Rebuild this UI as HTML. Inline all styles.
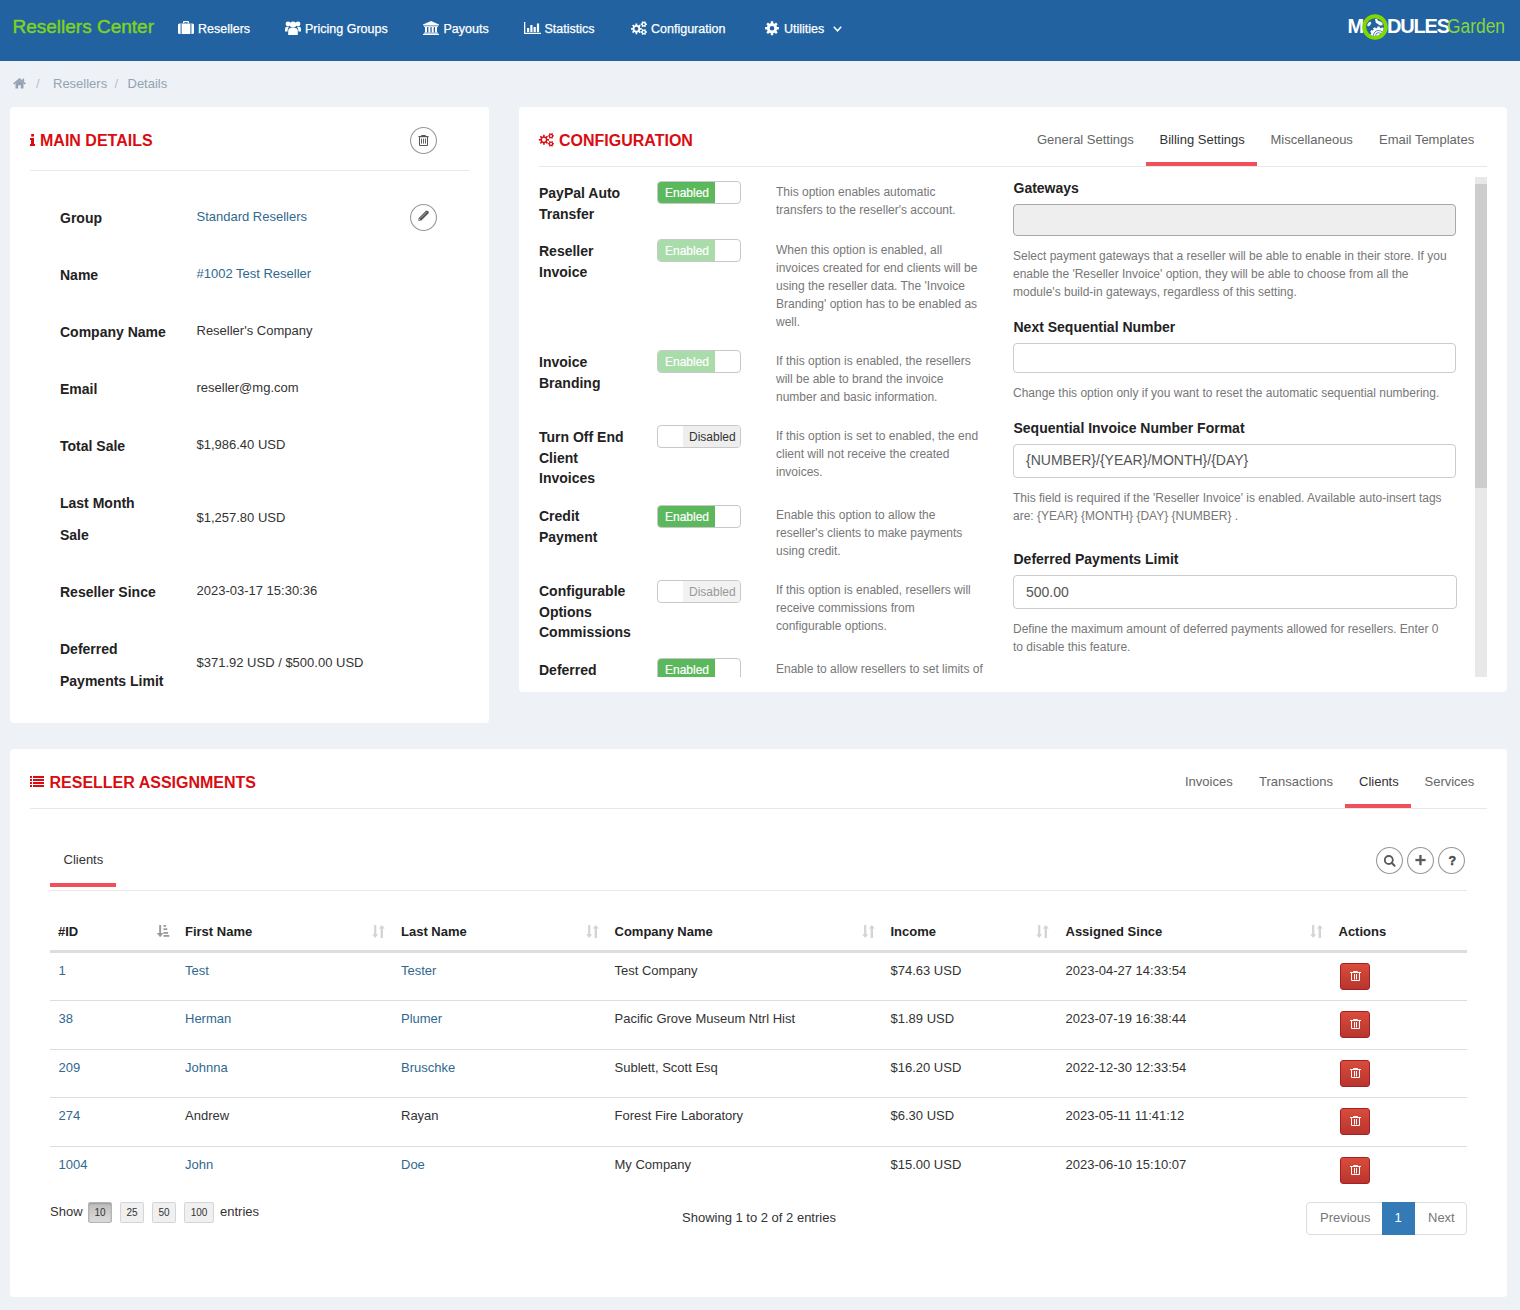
<!DOCTYPE html><html><head><meta charset="utf-8"><style>
html,body{margin:0;padding:0;width:1520px;height:1310px;overflow:hidden;background:#eef1f6;}
.a{position:absolute;}
.t{position:absolute;white-space:nowrap;line-height:1;font-family:'Liberation Sans', sans-serif;}
svg{overflow:visible}
</style></head><body>
<div class="a" style="left:0px;top:0px;width:1520px;height:61px;background:#2262a1"></div>
<div class="t" style="left:12.5px;top:17px;font-size:19px;color:#7ed321;-webkit-text-stroke:0.45px #7ed321;">Resellers Center</div>
<svg class="a" style="left:178px;top:21px;" width="16" height="13" viewBox="0 0 16 13"><path d="M5,2.2 V1 Q5,0 6,0 H10 Q11,0 11,1 V2.2 H9.8 V1.2 H6.2 V2.2 Z" fill="#fff"/><rect x="0" y="2.5" width="16" height="10.5" rx="1.6" fill="#fff"/><rect x="2.6" y="2.5" width="1" height="10.5" fill="#2262a1"/><rect x="12.4" y="2.5" width="1" height="10.5" fill="#2262a1"/></svg>
<div class="t" style="left:198px;top:23px;font-size:12.5px;color:#fff;-webkit-text-stroke:0.25px #fff">Resellers</div>
<svg class="a" style="left:285px;top:21px;" width="16" height="14" viewBox="0 0 16 14"><circle cx="8" cy="3.6" r="3.2" fill="#fff"/><circle cx="3" cy="2.9" r="2.4" fill="#fff"/><circle cx="13" cy="2.9" r="2.4" fill="#fff"/><path d="M3.2,14 V10 Q3.2,7 6,7 H10 Q12.8,7 12.8,10 V14 Z" fill="#fff"/><path d="M0,10.5 V8 Q0,5.8 2.3,5.8 H4.2 Q2.6,7 2.6,9.5 V10.5 Z" fill="#fff"/><path d="M16,10.5 V8 Q16,5.8 13.7,5.8 H11.8 Q13.4,7 13.4,9.5 V10.5 Z" fill="#fff"/></svg>
<div class="t" style="left:305px;top:23px;font-size:12.5px;color:#fff;-webkit-text-stroke:0.25px #fff">Pricing Groups</div>
<svg class="a" style="left:423px;top:21px;" width="16" height="14" viewBox="0 0 16 14"><path d="M8,0 L16,3.4 V4.6 H0 V3.4 Z" fill="#fff"/><rect x="1" y="5.2" width="14" height="0.9" fill="#fff"/><rect x="2" y="6" width="2" height="5.5" fill="#fff"/><rect x="5.4" y="6" width="2" height="5.5" fill="#fff"/><rect x="8.7" y="6" width="2" height="5.5" fill="#fff"/><rect x="12" y="6" width="2" height="5.5" fill="#fff"/><rect x="1" y="11.6" width="14" height="1" fill="#fff"/><rect x="0" y="12.8" width="16" height="1.2" fill="#fff"/></svg>
<div class="t" style="left:443.5px;top:23px;font-size:12.5px;color:#fff;-webkit-text-stroke:0.25px #fff">Payouts</div>
<svg class="a" style="left:524px;top:22px;" width="17" height="12" viewBox="0 0 17 12"><rect x="0" y="0" width="1.3" height="12" fill="#fff"/><rect x="0" y="10.8" width="17" height="1.2" fill="#fff"/><rect x="3" y="6" width="2.2" height="4.2" fill="#fff"/><rect x="6.3" y="3" width="2.2" height="7.2" fill="#fff"/><rect x="9.6" y="5" width="2.2" height="5.2" fill="#fff"/><rect x="12.9" y="1.5" width="2.2" height="8.7" fill="#fff"/></svg>
<div class="t" style="left:544.5px;top:23px;font-size:12.5px;color:#fff;-webkit-text-stroke:0.25px #fff">Statistics</div>
<svg class="a" style="left:631px;top:21px;" width="16" height="14" viewBox="0 0 16 14"><path fill-rule="evenodd" fill="#fff" d="M9.20,6.92 L10.73,6.91 L10.73,8.69 L9.20,8.68 L8.71,9.86 L9.79,10.94 L8.54,12.19 L7.46,11.11 L6.28,11.60 L6.29,13.13 L4.51,13.13 L4.52,11.60 L3.34,11.11 L2.26,12.19 L1.01,10.94 L2.09,9.86 L1.60,8.68 L0.07,8.69 L0.07,6.91 L1.60,6.92 L2.09,5.74 L1.01,4.66 L2.26,3.41 L3.34,4.49 L4.52,4.00 L4.51,2.47 L6.29,2.47 L6.28,4.00 L7.46,4.49 L8.54,3.41 L9.79,4.66 L8.71,5.74 Z M7.40,7.80 A2.0,2.0 0 1,0 3.40,7.80 A2.0,2.0 0 1,0 7.40,7.80 Z"/><path fill-rule="evenodd" fill="#fff" d="M15.08,2.45 L15.91,2.45 L15.91,3.95 L15.08,3.95 L14.59,4.80 L15.00,5.52 L13.71,6.27 L13.29,5.55 L12.31,5.55 L11.89,6.27 L10.60,5.52 L11.01,4.80 L10.52,3.95 L9.69,3.95 L9.69,2.45 L10.52,2.45 L11.01,1.60 L10.60,0.88 L11.89,0.13 L12.31,0.85 L13.29,0.85 L13.71,0.13 L15.00,0.88 L14.59,1.60 Z M13.80,3.20 A1.0,1.0 0 1,0 11.80,3.20 A1.0,1.0 0 1,0 13.80,3.20 Z"/><path fill-rule="evenodd" fill="#fff" d="M15.08,10.25 L15.91,10.25 L15.91,11.75 L15.08,11.75 L14.59,12.60 L15.00,13.32 L13.71,14.07 L13.29,13.35 L12.31,13.35 L11.89,14.07 L10.60,13.32 L11.01,12.60 L10.52,11.75 L9.69,11.75 L9.69,10.25 L10.52,10.25 L11.01,9.40 L10.60,8.68 L11.89,7.93 L12.31,8.65 L13.29,8.65 L13.71,7.93 L15.00,8.68 L14.59,9.40 Z M13.80,11.00 A1.0,1.0 0 1,0 11.80,11.00 A1.0,1.0 0 1,0 13.80,11.00 Z"/></svg>
<div class="t" style="left:651px;top:23px;font-size:12.5px;color:#fff;-webkit-text-stroke:0.25px #fff">Configuration</div>
<svg class="a" style="left:764.5px;top:20.5px;" width="14" height="14.5" viewBox="0 0 14 14.5"><path fill-rule="evenodd" fill="#fff" d="M12.05,6.02 L13.89,6.02 L13.89,8.48 L12.05,8.48 L11.44,9.95 L12.74,11.25 L11.00,12.99 L9.70,11.69 L8.23,12.30 L8.23,14.14 L5.77,14.14 L5.77,12.30 L4.30,11.69 L3.00,12.99 L1.26,11.25 L2.56,9.95 L1.95,8.48 L0.11,8.48 L0.11,6.02 L1.95,6.02 L2.56,4.55 L1.26,3.25 L3.00,1.51 L4.30,2.81 L5.77,2.20 L5.77,0.36 L8.23,0.36 L8.23,2.20 L9.70,2.81 L11.00,1.51 L12.74,3.25 L11.44,4.55 Z M9.30,7.25 A2.3,2.3 0 1,0 4.70,7.25 A2.3,2.3 0 1,0 9.30,7.25 Z"/></svg>
<div class="t" style="left:784px;top:23px;font-size:12.5px;color:#fff;-webkit-text-stroke:0.25px #fff">Utilities</div>
<svg class="a" style="left:833px;top:26px;" width="9" height="6" viewBox="0 0 9 6"><path d="M0.8,0.8 L4.5,4.8 L8.2,0.8" stroke="#fff" stroke-width="1.5" fill="none"/></svg>
<div class="t" style="left:1347.5px;top:16px;font-size:20px;font-weight:bold;color:#fff;">M</div>
<svg class="a" style="left:1362px;top:13.5px;" width="26" height="26" viewBox="0 0 26 26"><defs><clipPath id="gc"><circle cx="13" cy="13" r="8.9"/></clipPath></defs><circle cx="13" cy="13" r="10.8" fill="none" stroke="#80d800" stroke-width="3.9"/><g clip-path="url(#gc)"><path d="M5,11 L6.5,8.5 L8.8,7.6 L9.2,9.5 L8,11.5 L6,12.6 Z" fill="#fff" opacity="0.9"/><path d="M13,5 L15,4.8 L16,6.8 L18.5,7.6 L20.5,9 L20.6,11.2 L18,11.4 L15.8,10 L13.8,8.8 Z" fill="#fff"/><path fill="#fff" d="M23.99,20.19 L25.42,20.33 L25.42,22.67 L23.99,22.81 L23.64,24.11 L24.81,24.94 L23.64,26.98 L22.33,26.38 L21.38,27.33 L21.98,28.64 L19.94,29.81 L19.11,28.64 L17.81,28.99 L17.67,30.42 L15.33,30.42 L15.19,28.99 L13.89,28.64 L13.06,29.81 L11.02,28.64 L11.62,27.33 L10.67,26.38 L9.36,26.98 L8.19,24.94 L9.36,24.11 L9.01,22.81 L7.58,22.67 L7.58,20.33 L9.01,20.19 L9.36,18.89 L8.19,18.06 L9.36,16.02 L10.67,16.62 L11.62,15.67 L11.02,14.36 L13.06,13.19 L13.89,14.36 L15.19,14.01 L15.33,12.58 L17.67,12.58 L17.81,14.01 L19.11,14.36 L19.94,13.19 L21.98,14.36 L21.38,15.67 L22.33,16.62 L23.64,16.02 L24.81,18.06 L23.64,18.89 Z"/><circle cx="16.5" cy="21.5" r="5" fill="none" stroke="#2262a1" stroke-width="0.8"/><circle cx="16.5" cy="21.5" r="2.8" fill="none" stroke="#2262a1" stroke-width="0.8"/></g></svg>
<div class="t" style="left:1387px;top:16px;font-size:20px;font-weight:bold;color:#fff;letter-spacing:-1.2px;">DULES</div>
<div class="t" style="left:1447px;top:16px;font-size:20px;font-weight:normal;color:#86d63a;transform-origin:0 0;transform:scaleX(0.87);">Garden</div>
<svg class="a" style="left:12.5px;top:77.5px;" width="13" height="10.5" viewBox="0 0 13 10.5"><path d="M6.5,0 L13,5.6 L11.6,6.6 L6.5,2.2 L1.4,6.6 L0,5.6 Z" fill="#93a3b3"/><path d="M2.5,5.6 L6.5,2.2 L10.5,5.6 V10.5 H7.8 V7.3 H5.2 V10.5 H2.5 Z" fill="#93a3b3"/><rect x="9.5" y="0.6" width="1.6" height="3" fill="#93a3b3"/></svg>
<div class="t" style="left:36px;top:77px;font-size:13px;color:#b5c0cb;">/</div>
<div class="t" style="left:53px;top:77px;font-size:13px;color:#93a3b3;">Resellers</div>
<div class="t" style="left:114.5px;top:77px;font-size:13px;color:#b5c0cb;">/</div>
<div class="t" style="left:127.5px;top:77px;font-size:13px;color:#93a3b3;">Details</div>
<div class="a" style="left:10px;top:107px;width:479px;height:616px;background:#fff;border-radius:4px;"></div>
<div class="a" style="left:519px;top:107px;width:988px;height:585px;background:#fff;border-radius:4px;"></div>
<div class="a" style="left:10px;top:749px;width:1497px;height:548px;background:#fff;border-radius:4px;"></div>
<svg class="a" style="left:30px;top:134px;" width="5" height="12" viewBox="0 0 5 12"><rect x="1.2" y="0" width="2.8" height="2.6" fill="#d90c12"/><path d="M0,4 H4 V10 H5 V12 H0 V10 H1 V6 H0 Z" fill="#d90c12"/></svg>
<div class="t" style="left:40px;top:133px;font-size:16px;font-weight:bold;color:#d90c12;">MAIN DETAILS</div>
<div class="a" style="left:30px;top:170px;width:439px;height:1px;background:#e8e8e8"></div>
<svg class="a" style="left:410px;top:127px;" width="27" height="27" viewBox="0 0 27 27"><circle cx="13.5" cy="13.5" r="12.95" fill="#fff" stroke="#9a9a9a" stroke-width="1.1"/></svg>

<svg class="a" style="left:418px;top:134px;" width="11" height="12" viewBox="0 0 11 12"><path d="M3.5,2.5 V1.5 H7.5 V2.5" fill="none" stroke="#555" stroke-width="1"/><rect x="0.5" y="2" width="10" height="1.2" fill="#555"/><path d="M1.5,3 V11.5 H9.5 V3" fill="none" stroke="#555" stroke-width="1"/><rect x="3" y="4.6" width="1" height="5" fill="#666"/><rect x="5" y="4.6" width="1" height="5" fill="#666"/><rect x="7" y="4.6" width="1" height="5" fill="#666"/></svg>
<svg class="a" style="left:410px;top:204px;" width="27" height="27" viewBox="0 0 27 27"><circle cx="13.5" cy="13.5" r="12.95" fill="#fff" stroke="#9a9a9a" stroke-width="1.1"/></svg>

<svg class="a" style="left:417px;top:210px;" width="13" height="13" viewBox="0 0 13 13"><path d="M1.2,10.8 L1.8,8 L8.8,1 Q9.8,0 10.8,1 L11.4,1.6 Q12.4,2.6 11.4,3.6 L4.4,10.6 Z" fill="#555"/><path d="M3,8.6 L9.6,2" stroke="#ddd" stroke-width="0.6"/><path d="M2,9 L3.4,10.4" stroke="#ccc" stroke-width="0.8"/></svg>
<div class="t" style="left:60px;top:211px;font-size:14px;font-weight:bold;color:#222;">Group</div>
<div class="t" style="left:196.5px;top:210px;font-size:13px;color:#31688f;">Standard Resellers</div>
<div class="t" style="left:60px;top:268px;font-size:14px;font-weight:bold;color:#222;">Name</div>
<div class="t" style="left:196.5px;top:267px;font-size:13px;color:#31688f;">#1002 Test Reseller</div>
<div class="t" style="left:60px;top:325px;font-size:14px;font-weight:bold;color:#222;">Company Name</div>
<div class="t" style="left:196.5px;top:324px;font-size:13px;color:#333;">Reseller's Company</div>
<div class="t" style="left:60px;top:382px;font-size:14px;font-weight:bold;color:#222;">Email</div>
<div class="t" style="left:196.5px;top:381px;font-size:13px;color:#333;">reseller@mg.com</div>
<div class="t" style="left:60px;top:439px;font-size:14px;font-weight:bold;color:#222;">Total Sale</div>
<div class="t" style="left:196.5px;top:438px;font-size:13px;color:#333;">$1,986.40 USD</div>
<div class="t" style="left:60px;top:496px;font-size:14px;font-weight:bold;color:#222;">Last Month</div>
<div class="t" style="left:60px;top:528px;font-size:14px;font-weight:bold;color:#222;">Sale</div>
<div class="t" style="left:196.5px;top:511px;font-size:13px;color:#333;">$1,257.80 USD</div>
<div class="t" style="left:60px;top:585px;font-size:14px;font-weight:bold;color:#222;">Reseller Since</div>
<div class="t" style="left:196.5px;top:584px;font-size:13px;color:#333;">2023-03-17 15:30:36</div>
<div class="t" style="left:60px;top:642px;font-size:14px;font-weight:bold;color:#222;">Deferred</div>
<div class="t" style="left:60px;top:674px;font-size:14px;font-weight:bold;color:#222;">Payments Limit</div>
<div class="t" style="left:196.5px;top:656px;font-size:13px;color:#333;">$371.92 USD / $500.00 USD</div>
<svg class="a" style="left:539px;top:133px;" width="15" height="14" viewBox="0 0 15 14"><path fill-rule="evenodd" fill="#d90c12" d="M8.31,6.01 L9.93,5.96 L9.93,7.64 L8.31,7.59 L7.87,8.65 L9.05,9.77 L7.87,10.95 L6.75,9.77 L5.69,10.21 L5.74,11.83 L4.06,11.83 L4.11,10.21 L3.05,9.77 L1.93,10.95 L0.75,9.77 L1.93,8.65 L1.49,7.59 L-0.13,7.64 L-0.13,5.96 L1.49,6.01 L1.93,4.95 L0.75,3.83 L1.93,2.65 L3.05,3.83 L4.11,3.39 L4.06,1.77 L5.74,1.77 L5.69,3.39 L6.75,3.83 L7.87,2.65 L9.05,3.83 L7.87,4.95 Z M6.90,6.80 A2.0,2.0 0 1,0 2.90,6.80 A2.0,2.0 0 1,0 6.90,6.80 Z"/><path fill-rule="evenodd" fill="#d90c12" d="M14.09,2.21 L14.92,2.20 L14.92,3.60 L14.09,3.59 L13.64,4.36 L14.07,5.08 L12.85,5.78 L12.45,5.05 L11.55,5.05 L11.15,5.78 L9.93,5.08 L10.36,4.36 L9.91,3.59 L9.08,3.60 L9.08,2.20 L9.91,2.21 L10.36,1.44 L9.93,0.72 L11.15,0.02 L11.55,0.75 L12.45,0.75 L12.85,0.02 L14.07,0.72 L13.64,1.44 Z M13.00,2.90 A1.0,1.0 0 1,0 11.00,2.90 A1.0,1.0 0 1,0 13.00,2.90 Z"/><path fill-rule="evenodd" fill="#d90c12" d="M14.09,10.11 L14.92,10.10 L14.92,11.50 L14.09,11.49 L13.64,12.26 L14.07,12.98 L12.85,13.68 L12.45,12.95 L11.55,12.95 L11.15,13.68 L9.93,12.98 L10.36,12.26 L9.91,11.49 L9.08,11.50 L9.08,10.10 L9.91,10.11 L10.36,9.34 L9.93,8.62 L11.15,7.92 L11.55,8.65 L12.45,8.65 L12.85,7.92 L14.07,8.62 L13.64,9.34 Z M13.00,10.80 A1.0,1.0 0 1,0 11.00,10.80 A1.0,1.0 0 1,0 13.00,10.80 Z"/></svg>
<div class="t" style="left:559px;top:133px;font-size:16px;font-weight:bold;color:#d90c12;">CONFIGURATION</div>
<div class="a" style="left:539px;top:166px;width:948px;height:1px;background:#e8e8e8"></div>
<div class="t" style="left:1037px;top:133px;font-size:13px;color:#666;">General Settings</div>
<div class="t" style="left:1159.5px;top:133px;font-size:13px;color:#333;">Billing Settings</div>
<div class="t" style="left:1270.5px;top:133px;font-size:13px;color:#666;">Miscellaneous</div>
<div class="t" style="left:1379px;top:133px;font-size:13px;color:#666;">Email Templates</div>
<div class="a" style="left:1146px;top:162px;width:111px;height:4px;background:#ef505c"></div>
<div class="a" style="left:519px;top:177px;width:988px;height:500px;overflow:hidden">
<div class="a" style="left:138px;top:4px;width:84px;height:23px;box-sizing:border-box;border:1px solid #c8c8c8;border-radius:4px;background:#fff;overflow:hidden"><div class="a" style="left:0;top:0;width:57px;height:21px;background:#5cb85c"></div><div class="t" style="left:7px;top:5px;font-size:12px;color:#fff;-webkit-text-stroke:0.2px #fff">Enabled</div></div>
<div class="t" style="left:20px;top:9.0px;font-size:14px;font-weight:bold;color:#222;">PayPal Auto</div>
<div class="t" style="left:20px;top:29.69999999999999px;font-size:14px;font-weight:bold;color:#222;">Transfer</div>
<div class="t" style="left:257px;top:9px;font-size:12px;color:#777;">This option enables automatic</div>
<div class="t" style="left:257px;top:27px;font-size:12px;color:#777;">transfers to the reseller's account.</div>
<div class="a" style="left:138px;top:62px;width:84px;height:23px;box-sizing:border-box;border:1px solid #c8c8c8;border-radius:4px;background:#fff;overflow:hidden"><div class="a" style="left:0;top:0;width:57px;height:21px;background:#a9dcaa"></div><div class="t" style="left:7px;top:5px;font-size:12px;color:#fff;-webkit-text-stroke:0.2px #fff">Enabled</div></div>
<div class="t" style="left:20px;top:67.0px;font-size:14px;font-weight:bold;color:#222;">Reseller</div>
<div class="t" style="left:20px;top:87.69999999999999px;font-size:14px;font-weight:bold;color:#222;">Invoice</div>
<div class="t" style="left:257px;top:67px;font-size:12px;color:#777;">When this option is enabled, all</div>
<div class="t" style="left:257px;top:85px;font-size:12px;color:#777;">invoices created for end clients will be</div>
<div class="t" style="left:257px;top:103px;font-size:12px;color:#777;">using the reseller data. The 'Invoice</div>
<div class="t" style="left:257px;top:121px;font-size:12px;color:#777;">Branding' option has to be enabled as</div>
<div class="t" style="left:257px;top:139px;font-size:12px;color:#777;">well.</div>
<div class="a" style="left:138px;top:173px;width:84px;height:23px;box-sizing:border-box;border:1px solid #c8c8c8;border-radius:4px;background:#fff;overflow:hidden"><div class="a" style="left:0;top:0;width:57px;height:21px;background:#a9dcaa"></div><div class="t" style="left:7px;top:5px;font-size:12px;color:#fff;-webkit-text-stroke:0.2px #fff">Enabled</div></div>
<div class="t" style="left:20px;top:178.0px;font-size:14px;font-weight:bold;color:#222;">Invoice</div>
<div class="t" style="left:20px;top:198.7px;font-size:14px;font-weight:bold;color:#222;">Branding</div>
<div class="t" style="left:257px;top:178px;font-size:12px;color:#777;">If this option is enabled, the resellers</div>
<div class="t" style="left:257px;top:196px;font-size:12px;color:#777;">will be able to brand the invoice</div>
<div class="t" style="left:257px;top:214px;font-size:12px;color:#777;">number and basic information.</div>
<div class="a" style="left:138px;top:248px;width:84px;height:23px;box-sizing:border-box;border:1px solid #c8c8c8;border-radius:4px;background:#fff;overflow:hidden"><div class="a" style="left:25px;top:0;width:58px;height:21px;background:#eee"></div><div class="t" style="left:31px;top:5px;font-size:12px;color:#333">Disabled</div></div>
<div class="t" style="left:20px;top:253.0px;font-size:14px;font-weight:bold;color:#222;">Turn Off End</div>
<div class="t" style="left:20px;top:273.7px;font-size:14px;font-weight:bold;color:#222;">Client</div>
<div class="t" style="left:20px;top:294.4px;font-size:14px;font-weight:bold;color:#222;">Invoices</div>
<div class="t" style="left:257px;top:253px;font-size:12px;color:#777;">If this option is set to enabled, the end</div>
<div class="t" style="left:257px;top:271px;font-size:12px;color:#777;">client will not receive the created</div>
<div class="t" style="left:257px;top:289px;font-size:12px;color:#777;">invoices.</div>
<div class="a" style="left:138px;top:328px;width:84px;height:23px;box-sizing:border-box;border:1px solid #c8c8c8;border-radius:4px;background:#fff;overflow:hidden"><div class="a" style="left:0;top:0;width:57px;height:21px;background:#5cb85c"></div><div class="t" style="left:7px;top:5px;font-size:12px;color:#fff;-webkit-text-stroke:0.2px #fff">Enabled</div></div>
<div class="t" style="left:20px;top:332.0px;font-size:14px;font-weight:bold;color:#222;">Credit</div>
<div class="t" style="left:20px;top:352.70000000000005px;font-size:14px;font-weight:bold;color:#222;">Payment</div>
<div class="t" style="left:257px;top:332px;font-size:12px;color:#777;">Enable this option to allow the</div>
<div class="t" style="left:257px;top:350px;font-size:12px;color:#777;">reseller's clients to make payments</div>
<div class="t" style="left:257px;top:368px;font-size:12px;color:#777;">using credit.</div>
<div class="a" style="left:138px;top:403px;width:84px;height:23px;box-sizing:border-box;border:1px solid #c8c8c8;border-radius:4px;background:#fff;overflow:hidden"><div class="a" style="left:25px;top:0;width:58px;height:21px;background:#f2f2f2"></div><div class="t" style="left:31px;top:5px;font-size:12px;color:#999">Disabled</div></div>
<div class="t" style="left:20px;top:407.0px;font-size:14px;font-weight:bold;color:#222;">Configurable</div>
<div class="t" style="left:20px;top:427.70000000000005px;font-size:14px;font-weight:bold;color:#222;">Options</div>
<div class="t" style="left:20px;top:448.4px;font-size:14px;font-weight:bold;color:#222;">Commissions</div>
<div class="t" style="left:257px;top:407px;font-size:12px;color:#777;">If this option is enabled, resellers will</div>
<div class="t" style="left:257px;top:425px;font-size:12px;color:#777;">receive commissions from</div>
<div class="t" style="left:257px;top:443px;font-size:12px;color:#777;">configurable options.</div>
<div class="a" style="left:138px;top:481px;width:84px;height:23px;box-sizing:border-box;border:1px solid #c8c8c8;border-radius:4px;background:#fff;overflow:hidden"><div class="a" style="left:0;top:0;width:57px;height:21px;background:#5cb85c"></div><div class="t" style="left:7px;top:5px;font-size:12px;color:#fff;-webkit-text-stroke:0.2px #fff">Enabled</div></div>
<div class="t" style="left:20px;top:486.0px;font-size:14px;font-weight:bold;color:#222;">Deferred</div>
<div class="t" style="left:20px;top:506.70000000000005px;font-size:14px;font-weight:bold;color:#222;">Payments</div>
<div class="t" style="left:20px;top:527.4px;font-size:14px;font-weight:bold;color:#222;">Limit</div>
<div class="t" style="left:257px;top:486px;font-size:12px;color:#777;">Enable to allow resellers to set limits of</div>
<div class="t" style="left:257px;top:504px;font-size:12px;color:#777;">deferred payments.</div>
<div class="t" style="left:494.5px;top:4px;font-size:14px;font-weight:bold;color:#222;">Gateways</div>
<div class="a" style="left:494px;top:27px;width:443px;height:32px;box-sizing:border-box;border:1px solid #a8a8a8;border-radius:4px;background:#eee"></div>
<div class="t" style="left:494px;top:72.5px;font-size:12px;color:#777;">Select payment gateways that a reseller will be able to enable in their store. If you</div>
<div class="t" style="left:494px;top:90.5px;font-size:12px;color:#777;">enable the 'Reseller Invoice' option, they will be able to choose from all the</div>
<div class="t" style="left:494px;top:108.5px;font-size:12px;color:#777;">module's build-in gateways, regardless of this setting.</div>
<div class="t" style="left:494.5px;top:142.5px;font-size:14px;font-weight:bold;color:#222;">Next Sequential Number</div>
<div class="a" style="left:494px;top:166px;width:443px;height:30px;box-sizing:border-box;border:1px solid #ccc;border-radius:4px;background:#fff"></div>
<div class="t" style="left:494px;top:209.5px;font-size:12px;color:#777;">Change this option only if you want to reset the automatic sequential numbering.</div>
<div class="t" style="left:494.5px;top:243.5px;font-size:14px;font-weight:bold;color:#222;">Sequential Invoice Number Format</div>
<div class="a" style="left:494px;top:267px;width:443px;height:34px;box-sizing:border-box;border:1px solid #ccc;border-radius:4px;background:#fff"></div>
<div class="t" style="left:507px;top:276px;font-size:14px;color:#555;">{NUMBER}/{YEAR}/MONTH}/{DAY}</div>
<div class="t" style="left:494px;top:314.5px;font-size:12px;color:#777;">This field is required if the 'Reseller Invoice' is enabled. Available auto-insert tags</div>
<div class="t" style="left:494px;top:332.5px;font-size:12px;color:#777;">are: {YEAR} {MONTH} {DAY} {NUMBER} .</div>
<div class="t" style="left:494.5px;top:374.5px;font-size:14px;font-weight:bold;color:#222;">Deferred Payments Limit</div>
<div class="a" style="left:494px;top:398px;width:444px;height:34px;box-sizing:border-box;border:1px solid #ccc;border-radius:4px;background:#fff"></div>
<div class="t" style="left:507px;top:408px;font-size:14px;color:#555;">500.00</div>
<div class="t" style="left:494px;top:446px;font-size:12px;color:#777;">Define the maximum amount of deferred payments allowed for resellers. Enter 0</div>
<div class="t" style="left:494px;top:464px;font-size:12px;color:#777;">to disable this feature.</div>
</div>
<div class="a" style="left:1475px;top:177px;width:12px;height:500px;background:#e8e8e8"></div>
<div class="a" style="left:1475px;top:184px;width:12px;height:304px;background:#cdcdcd"></div>
<svg class="a" style="left:30px;top:776px;" width="15" height="11" viewBox="0 0 15 11"><rect x="0" y="0" width="2" height="2" fill="#d90c12"/><rect x="3" y="0" width="11" height="2" fill="#d90c12"/><rect x="0" y="3" width="2" height="2" fill="#d90c12"/><rect x="3" y="3" width="11" height="2" fill="#d90c12"/><rect x="0" y="6" width="2" height="2" fill="#d90c12"/><rect x="3" y="6" width="11" height="2" fill="#d90c12"/><rect x="0" y="9" width="2" height="2" fill="#d90c12"/><rect x="3" y="9" width="11" height="2" fill="#d90c12"/></svg>
<div class="t" style="left:49.5px;top:775px;font-size:16px;font-weight:bold;color:#d90c12;">RESELLER ASSIGNMENTS</div>
<div class="a" style="left:30px;top:808px;width:1457px;height:1px;background:#e8e8e8"></div>
<div class="t" style="left:1185px;top:775px;font-size:13px;color:#666;">Invoices</div>
<div class="t" style="left:1259px;top:775px;font-size:13px;color:#666;">Transactions</div>
<div class="t" style="left:1359px;top:775px;font-size:13px;color:#333;">Clients</div>
<div class="t" style="left:1424.5px;top:775px;font-size:13px;color:#666;">Services</div>
<div class="a" style="left:1345px;top:804px;width:66px;height:4px;background:#ef505c"></div>
<div class="t" style="left:63.5px;top:853px;font-size:13px;color:#333;">Clients</div>
<div class="a" style="left:50px;top:883px;width:66px;height:4px;background:#ef505c"></div>
<div class="a" style="left:50px;top:890px;width:1417px;height:1px;background:#e8e8e8"></div>
<svg class="a" style="left:1376px;top:847px;" width="27" height="27" viewBox="0 0 27 27"><circle cx="13.5" cy="13.5" r="12.95" fill="#fff" stroke="#9a9a9a" stroke-width="1.1"/></svg>
<svg class="a" style="left:1407px;top:847px;" width="27" height="27" viewBox="0 0 27 27"><circle cx="13.5" cy="13.5" r="12.95" fill="#fff" stroke="#9a9a9a" stroke-width="1.1"/></svg>
<svg class="a" style="left:1438px;top:847px;" width="27" height="27" viewBox="0 0 27 27"><circle cx="13.5" cy="13.5" r="12.95" fill="#fff" stroke="#9a9a9a" stroke-width="1.1"/></svg>
<svg class="a" style="left:1383px;top:854px;" width="13" height="13" viewBox="0 0 13 13"><circle cx="5.8" cy="6" r="4" fill="none" stroke="#5a5a5a" stroke-width="1.8"/><path d="M8.6,8.8 L11.6,11.8" stroke="#5a5a5a" stroke-width="2" stroke-linecap="round"/></svg>
<svg class="a" style="left:1414px;top:854px;" width="13" height="13" viewBox="0 0 13 13"><rect x="5.3" y="1" width="2.3" height="10.2" fill="#5a5a5a"/><rect x="1.4" y="4.9" width="10.2" height="2.3" fill="#5a5a5a"/></svg>
<div class="t" style="left:1448.5px;top:855px;font-size:12.5px;font-weight:bold;color:#4a4a4a;-webkit-text-stroke:0.4px #4a4a4a">?</div>
<div class="t" style="left:58px;top:925px;font-size:13px;font-weight:bold;color:#222;">#ID</div>
<div class="t" style="left:185px;top:925px;font-size:13px;font-weight:bold;color:#222;">First Name</div>
<div class="t" style="left:401px;top:925px;font-size:13px;font-weight:bold;color:#222;">Last Name</div>
<div class="t" style="left:614.5px;top:925px;font-size:13px;font-weight:bold;color:#222;">Company Name</div>
<div class="t" style="left:890.5px;top:925px;font-size:13px;font-weight:bold;color:#222;">Income</div>
<div class="t" style="left:1065.5px;top:925px;font-size:13px;font-weight:bold;color:#222;">Assigned Since</div>
<div class="t" style="left:1338.5px;top:925px;font-size:13px;font-weight:bold;color:#222;">Actions</div>
<div class="a" style="left:50px;top:950px;width:1417px;height:3px;background:#ddd"></div>
<svg class="a" style="left:155.5px;top:924px;" width="14" height="14" viewBox="0 0 14 14"><rect x="3.2" y="1" width="1.9" height="10" fill="#999"/><path d="M0.8,9 H7.5 L4.15,13.2 Z" fill="#999"/><rect x="7.5" y="1" width="2.6" height="1.8" fill="#999"/><rect x="7.5" y="4.3" width="3.8" height="1.8" fill="#999"/><rect x="7.5" y="8" width="4.6" height="1.8" fill="#999"/><rect x="7.5" y="11" width="5.8" height="1.8" fill="#999"/></svg>
<svg class="a" style="left:372px;top:924px;" width="14" height="14" viewBox="0 0 14 14"><rect x="2.1" y="1" width="2.2" height="10" fill="#d4d4d4"/><path d="M0.2,10.3 H6.2 L3.2,14 Z" fill="#d4d4d4"/><rect x="8.6" y="4" width="2.4" height="10" fill="#d4d4d4"/><path d="M6.8,4.4 H12.9 L9.8,1 Z" fill="#d4d4d4"/></svg>
<svg class="a" style="left:586px;top:924px;" width="14" height="14" viewBox="0 0 14 14"><rect x="2.1" y="1" width="2.2" height="10" fill="#d4d4d4"/><path d="M0.2,10.3 H6.2 L3.2,14 Z" fill="#d4d4d4"/><rect x="8.6" y="4" width="2.4" height="10" fill="#d4d4d4"/><path d="M6.8,4.4 H12.9 L9.8,1 Z" fill="#d4d4d4"/></svg>
<svg class="a" style="left:862px;top:924px;" width="14" height="14" viewBox="0 0 14 14"><rect x="2.1" y="1" width="2.2" height="10" fill="#d4d4d4"/><path d="M0.2,10.3 H6.2 L3.2,14 Z" fill="#d4d4d4"/><rect x="8.6" y="4" width="2.4" height="10" fill="#d4d4d4"/><path d="M6.8,4.4 H12.9 L9.8,1 Z" fill="#d4d4d4"/></svg>
<svg class="a" style="left:1036px;top:924px;" width="14" height="14" viewBox="0 0 14 14"><rect x="2.1" y="1" width="2.2" height="10" fill="#d4d4d4"/><path d="M0.2,10.3 H6.2 L3.2,14 Z" fill="#d4d4d4"/><rect x="8.6" y="4" width="2.4" height="10" fill="#d4d4d4"/><path d="M6.8,4.4 H12.9 L9.8,1 Z" fill="#d4d4d4"/></svg>
<svg class="a" style="left:1309.5px;top:924px;" width="14" height="14" viewBox="0 0 14 14"><rect x="2.1" y="1" width="2.2" height="10" fill="#d4d4d4"/><path d="M0.2,10.3 H6.2 L3.2,14 Z" fill="#d4d4d4"/><rect x="8.6" y="4" width="2.4" height="10" fill="#d4d4d4"/><path d="M6.8,4.4 H12.9 L9.8,1 Z" fill="#d4d4d4"/></svg>
<div class="t" style="left:58.5px;top:964px;font-size:13px;color:#31688f;">1</div>
<div class="t" style="left:185px;top:964px;font-size:13px;color:#31688f;">Test</div>
<div class="t" style="left:401px;top:964px;font-size:13px;color:#31688f;">Tester</div>
<div class="t" style="left:614.5px;top:964px;font-size:13px;color:#333;">Test Company</div>
<div class="t" style="left:890.5px;top:964px;font-size:13px;color:#333;">$74.63 USD</div>
<div class="t" style="left:1065.5px;top:964px;font-size:13px;color:#333;">2023-04-27 14:33:54</div>
<div class="a" style="left:1340px;top:963px;width:30px;height:27px;box-sizing:border-box;border:1px solid #a61f24;border-radius:3px;background:linear-gradient(#d94c3b,#b8352e)"></div>
<svg class="a" style="left:1350px;top:970px;" width="11" height="12" viewBox="0 0 11 12"><path d="M3.5,2.5 V1.5 H7.5 V2.5" fill="none" stroke="#fff" stroke-width="1"/><rect x="0" y="2" width="11" height="1" fill="#fff"/><path d="M1.5,3 V10.5 H9.5 V3" fill="none" stroke="#fff" stroke-width="1"/><rect x="4" y="4" width="1" height="5.5" fill="#fff"/><rect x="6" y="4" width="1" height="5.5" fill="#fff"/></svg>
<div class="t" style="left:58.5px;top:1012px;font-size:13px;color:#31688f;">38</div>
<div class="t" style="left:185px;top:1012px;font-size:13px;color:#31688f;">Herman</div>
<div class="t" style="left:401px;top:1012px;font-size:13px;color:#31688f;">Plumer</div>
<div class="t" style="left:614.5px;top:1012px;font-size:13px;color:#333;">Pacific Grove Museum Ntrl Hist</div>
<div class="t" style="left:890.5px;top:1012px;font-size:13px;color:#333;">$1.89 USD</div>
<div class="t" style="left:1065.5px;top:1012px;font-size:13px;color:#333;">2023-07-19 16:38:44</div>
<div class="a" style="left:1340px;top:1011px;width:30px;height:27px;box-sizing:border-box;border:1px solid #a61f24;border-radius:3px;background:linear-gradient(#d94c3b,#b8352e)"></div>
<svg class="a" style="left:1350px;top:1018px;" width="11" height="12" viewBox="0 0 11 12"><path d="M3.5,2.5 V1.5 H7.5 V2.5" fill="none" stroke="#fff" stroke-width="1"/><rect x="0" y="2" width="11" height="1" fill="#fff"/><path d="M1.5,3 V10.5 H9.5 V3" fill="none" stroke="#fff" stroke-width="1"/><rect x="4" y="4" width="1" height="5.5" fill="#fff"/><rect x="6" y="4" width="1" height="5.5" fill="#fff"/></svg>
<div class="t" style="left:58.5px;top:1061px;font-size:13px;color:#31688f;">209</div>
<div class="t" style="left:185px;top:1061px;font-size:13px;color:#31688f;">Johnna</div>
<div class="t" style="left:401px;top:1061px;font-size:13px;color:#31688f;">Bruschke</div>
<div class="t" style="left:614.5px;top:1061px;font-size:13px;color:#333;">Sublett, Scott Esq</div>
<div class="t" style="left:890.5px;top:1061px;font-size:13px;color:#333;">$16.20 USD</div>
<div class="t" style="left:1065.5px;top:1061px;font-size:13px;color:#333;">2022-12-30 12:33:54</div>
<div class="a" style="left:1340px;top:1060px;width:30px;height:27px;box-sizing:border-box;border:1px solid #a61f24;border-radius:3px;background:linear-gradient(#d94c3b,#b8352e)"></div>
<svg class="a" style="left:1350px;top:1067px;" width="11" height="12" viewBox="0 0 11 12"><path d="M3.5,2.5 V1.5 H7.5 V2.5" fill="none" stroke="#fff" stroke-width="1"/><rect x="0" y="2" width="11" height="1" fill="#fff"/><path d="M1.5,3 V10.5 H9.5 V3" fill="none" stroke="#fff" stroke-width="1"/><rect x="4" y="4" width="1" height="5.5" fill="#fff"/><rect x="6" y="4" width="1" height="5.5" fill="#fff"/></svg>
<div class="t" style="left:58.5px;top:1109px;font-size:13px;color:#31688f;">274</div>
<div class="t" style="left:185px;top:1109px;font-size:13px;color:#333;">Andrew</div>
<div class="t" style="left:401px;top:1109px;font-size:13px;color:#333;">Rayan</div>
<div class="t" style="left:614.5px;top:1109px;font-size:13px;color:#333;">Forest Fire Laboratory</div>
<div class="t" style="left:890.5px;top:1109px;font-size:13px;color:#333;">$6.30 USD</div>
<div class="t" style="left:1065.5px;top:1109px;font-size:13px;color:#333;">2023-05-11 11:41:12</div>
<div class="a" style="left:1340px;top:1108px;width:30px;height:27px;box-sizing:border-box;border:1px solid #a61f24;border-radius:3px;background:linear-gradient(#d94c3b,#b8352e)"></div>
<svg class="a" style="left:1350px;top:1115px;" width="11" height="12" viewBox="0 0 11 12"><path d="M3.5,2.5 V1.5 H7.5 V2.5" fill="none" stroke="#fff" stroke-width="1"/><rect x="0" y="2" width="11" height="1" fill="#fff"/><path d="M1.5,3 V10.5 H9.5 V3" fill="none" stroke="#fff" stroke-width="1"/><rect x="4" y="4" width="1" height="5.5" fill="#fff"/><rect x="6" y="4" width="1" height="5.5" fill="#fff"/></svg>
<div class="t" style="left:58.5px;top:1158px;font-size:13px;color:#31688f;">1004</div>
<div class="t" style="left:185px;top:1158px;font-size:13px;color:#31688f;">John</div>
<div class="t" style="left:401px;top:1158px;font-size:13px;color:#31688f;">Doe</div>
<div class="t" style="left:614.5px;top:1158px;font-size:13px;color:#333;">My Company</div>
<div class="t" style="left:890.5px;top:1158px;font-size:13px;color:#333;">$15.00 USD</div>
<div class="t" style="left:1065.5px;top:1158px;font-size:13px;color:#333;">2023-06-10 15:10:07</div>
<div class="a" style="left:1340px;top:1157px;width:30px;height:27px;box-sizing:border-box;border:1px solid #a61f24;border-radius:3px;background:linear-gradient(#d94c3b,#b8352e)"></div>
<svg class="a" style="left:1350px;top:1164px;" width="11" height="12" viewBox="0 0 11 12"><path d="M3.5,2.5 V1.5 H7.5 V2.5" fill="none" stroke="#fff" stroke-width="1"/><rect x="0" y="2" width="11" height="1" fill="#fff"/><path d="M1.5,3 V10.5 H9.5 V3" fill="none" stroke="#fff" stroke-width="1"/><rect x="4" y="4" width="1" height="5.5" fill="#fff"/><rect x="6" y="4" width="1" height="5.5" fill="#fff"/></svg>
<div class="a" style="left:50px;top:1000px;width:1417px;height:1px;background:#ddd"></div>
<div class="a" style="left:50px;top:1049px;width:1417px;height:1px;background:#ddd"></div>
<div class="a" style="left:50px;top:1097px;width:1417px;height:1px;background:#ddd"></div>
<div class="a" style="left:50px;top:1146px;width:1417px;height:1px;background:#ddd"></div>
<div class="t" style="left:50px;top:1205px;font-size:13px;color:#333;">Show</div>
<div class="a" style="left:88px;top:1202px;width:24px;height:21px;box-sizing:border-box;border:1px solid #b5b5b5;border-radius:2px;background:linear-gradient(#bdbdbd,#dcdcdc);box-shadow:inset 0 1px 2px rgba(0,0,0,0.2);"></div>
<div class="t" style="left:94.44px;top:1208px;font-size:10px;color:#333;">10</div>
<div class="a" style="left:120px;top:1202px;width:24px;height:21px;box-sizing:border-box;border:1px solid #d5d5d5;border-radius:2px;background:#f0f0f0;"></div>
<div class="t" style="left:126.44px;top:1208px;font-size:10px;color:#333;">25</div>
<div class="a" style="left:152px;top:1202px;width:24px;height:21px;box-sizing:border-box;border:1px solid #d5d5d5;border-radius:2px;background:#f0f0f0;"></div>
<div class="t" style="left:158.44px;top:1208px;font-size:10px;color:#333;">50</div>
<div class="a" style="left:184px;top:1202px;width:30px;height:21px;box-sizing:border-box;border:1px solid #d5d5d5;border-radius:2px;background:#f0f0f0;"></div>
<div class="t" style="left:190.66px;top:1208px;font-size:10px;color:#333;">100</div>
<div class="t" style="left:220px;top:1205px;font-size:13px;color:#333;">entries</div>
<div class="t" style="left:682px;top:1211px;font-size:13px;color:#333;">Showing 1 to 2 of 2 entries</div>
<div class="a" style="left:1306px;top:1202px;width:161px;height:33px;box-sizing:border-box;border:1px solid #ddd;border-radius:4px;background:#fff"></div>
<div class="a" style="left:1382px;top:1202px;width:33px;height:33px;background:#337ab7"></div>
<div class="t" style="left:1320px;top:1211px;font-size:13px;color:#777;">Previous</div>
<div class="t" style="left:1394.5px;top:1211px;font-size:13px;color:#fff;">1</div>
<div class="t" style="left:1428px;top:1211px;font-size:13px;color:#777;">Next</div>
</body></html>
